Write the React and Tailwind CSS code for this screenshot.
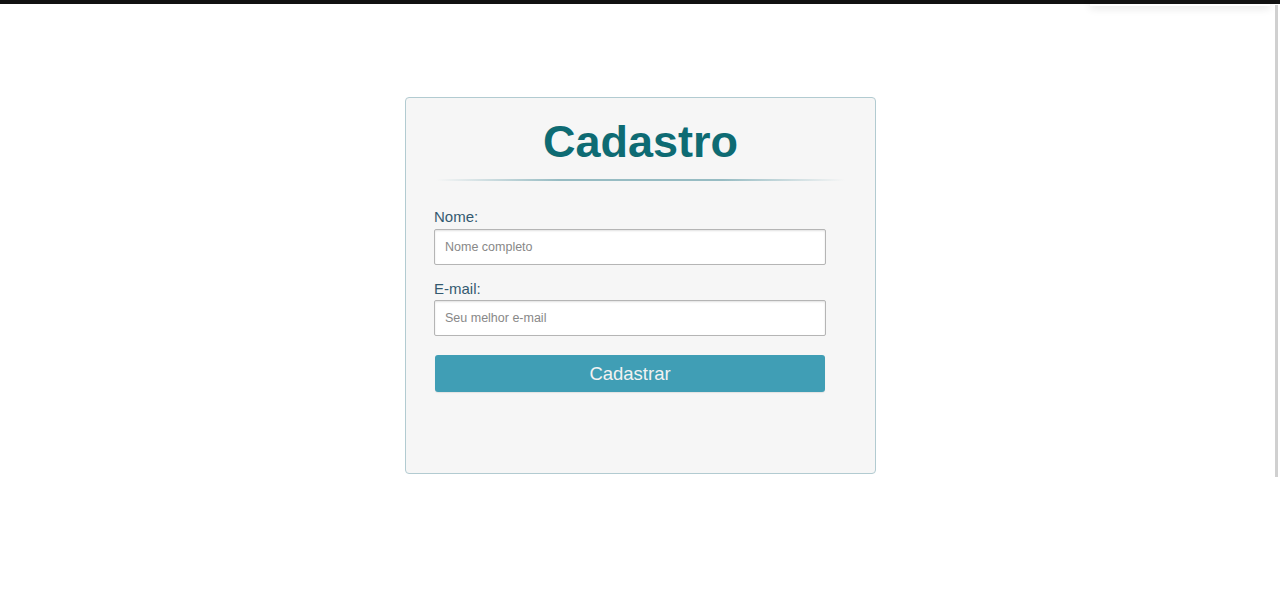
export default function App() {
  return (
    <div className="relative min-h-[590px] bg-white font-['Liberation_Sans',Arial,sans-serif]">
      <div className="h-[4px] bg-[#111]" />
      <div className="absolute right-[2px] top-[5px] h-[472px] w-[3px] bg-[#d0d0d0]" />
      <div className="absolute right-[10px] top-0 h-[6px] w-[180px] shadow-[0_2px_8px_rgba(0,0,0,0.12)]" />

      <div className="flex justify-center pt-[93px]">
        <div className="ml-[1px] h-[377px] w-[471px] rounded-[4px] border border-[#b2cbd1] bg-[#f6f6f6] px-[28px]">
          <h1 className="pt-[16px] text-center text-[45px] leading-[56px] font-bold text-[#0e6b73]">
            Cadastro
          </h1>
          <div className="mx-[2px] mt-[9px] h-[2px] bg-[linear-gradient(to_right,transparent,#97bcc3_30%,#97bcc3_70%,transparent)]" />

          <form className="mt-[26px] w-[392px]">
            <label className="block text-[15px] leading-[20px] text-[#345a70]">Nome:</label>
            <input
              type="text"
              placeholder="Nome completo"
              className="mt-[2px] h-[36px] w-full rounded-[2px] border border-[#b5b5b5] bg-white px-[10px] text-[12.5px] shadow-[inset_0_1px_2px_rgba(0,0,0,0.12)] placeholder:text-[#888]"
            />

            <label className="mt-[14px] block text-[15px] leading-[20px] text-[#345a70]">E-mail:</label>
            <input
              type="email"
              placeholder="Seu melhor e-mail"
              className="mt-[1px] h-[36px] w-full rounded-[2px] border border-[#b5b5b5] bg-white px-[10px] text-[12.5px] shadow-[inset_0_1px_2px_rgba(0,0,0,0.12)] placeholder:text-[#888]"
            />

            <button
              type="button"
              className="mt-[19px] ml-[1px] h-[37px] w-[390px] rounded-[3px] bg-[#409eb5] text-[18.5px] text-[#f2f2f2] shadow-[0_1px_1px_rgba(0,0,0,0.08)]"
            >
              Cadastrar
            </button>
          </form>
        </div>
      </div>
    </div>
  )
}
